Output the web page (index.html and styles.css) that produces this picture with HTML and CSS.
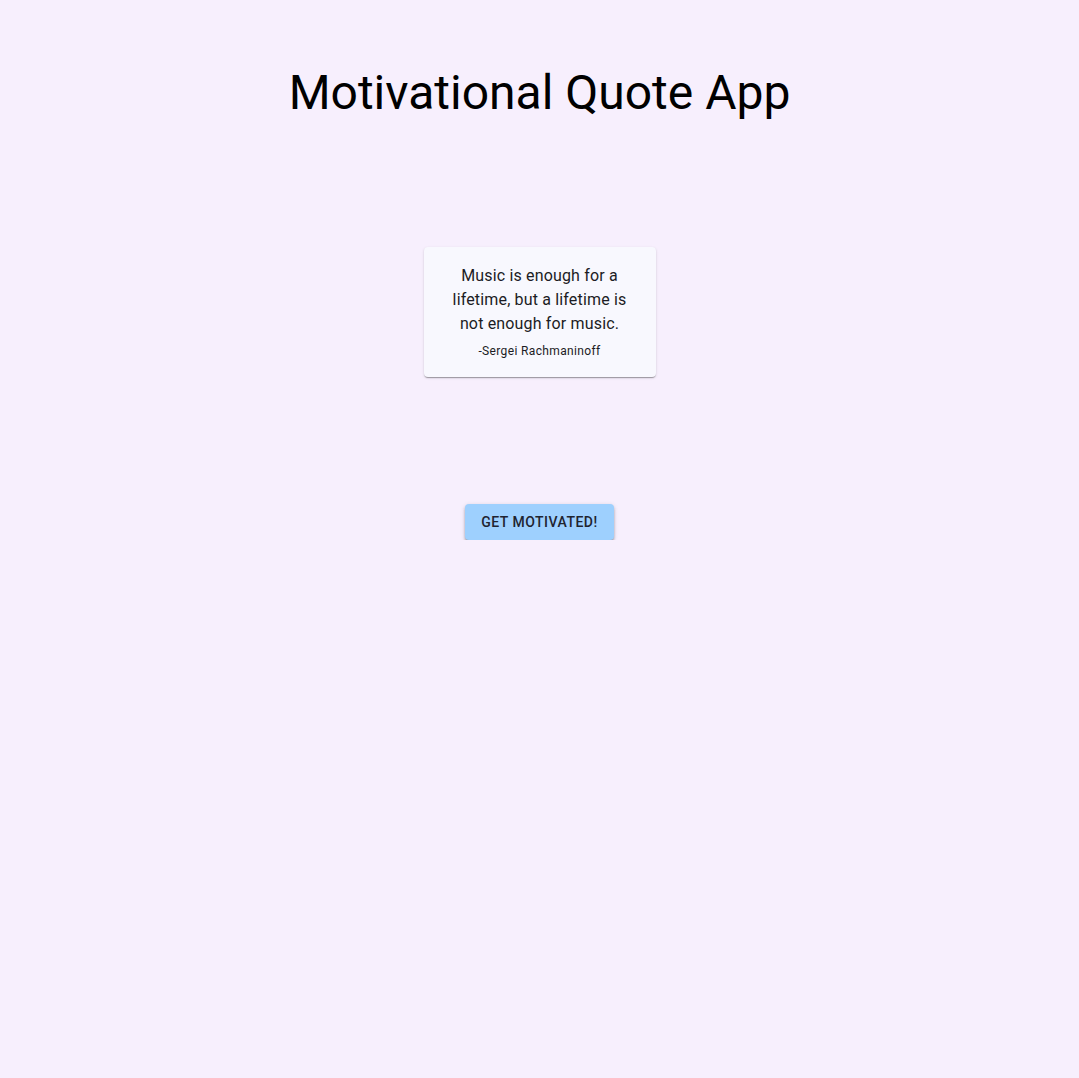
FILE: index.html
```html
<!DOCTYPE html>
<html>
<head>
<meta charset="utf-8">
<link rel="stylesheet" href="styles.css">
</head>
<body>
<main class="app">
  <h1 class="title">Motivational Quote App</h1>
  <div class="card">
    <p class="quote">Music is enough for a lifetime, but a lifetime is not enough for music.</p>
    <p class="author">-Sergei Rachmaninoff</p>
  </div>
  <button class="btn">Get Motivated!</button>
</main>
</body>
</html>
```

FILE: styles.css
```css
html, body {
  margin: 0;
  padding: 0;
  background: #f7effd;
  min-height: 100%;
}
body {
  font-family: Roboto, "Liberation Sans", sans-serif;
  color: #000;
}
.app {
  display: flex;
  flex-direction: column;
  align-items: center;
}
.title {
  margin: 63px 0 0;
  font-size: 48px;
  font-weight: 400;
  line-height: 60px;
  color: #000;
}
.card {
  margin-top: 124px;
  width: 200px;
  padding: 17px 16px 16px;
  background: #f8f8fe;
  border-radius: 4px;
  box-shadow: 0 2px 1px -1px rgba(0,0,0,0.2), 0 1px 1px 0 rgba(0,0,0,0.14), 0 1px 3px 0 rgba(0,0,0,0.12);
  text-align: center;
}
.quote {
  margin: 0;
  font-size: 16px;
  line-height: 24px;
  letter-spacing: 0.01em;
  color: #1c1c24;
}
.author {
  margin: 5px 0 0;
  font-size: 12px;
  line-height: 20px;
  letter-spacing: 0.03em;
  color: #1c1c24;
}
.btn {
  margin-top: 127px;
  height: 36px;
  padding: 6px 16px;
  border: none;
  border-radius: 4px;
  background: #9ed0fe;
  color: #1f2430;
  font-family: Roboto, "Liberation Sans", sans-serif;
  font-size: 14px;
  font-weight: 500;
  letter-spacing: 0.035em;
  text-transform: uppercase;
  box-shadow: 0 3px 3px -1px rgba(0,0,0,0.25), 0 2px 3px 0 rgba(0,0,0,0.16), 0 1px 5px 0 rgba(0,0,0,0.12);
  cursor: pointer;
}
```
